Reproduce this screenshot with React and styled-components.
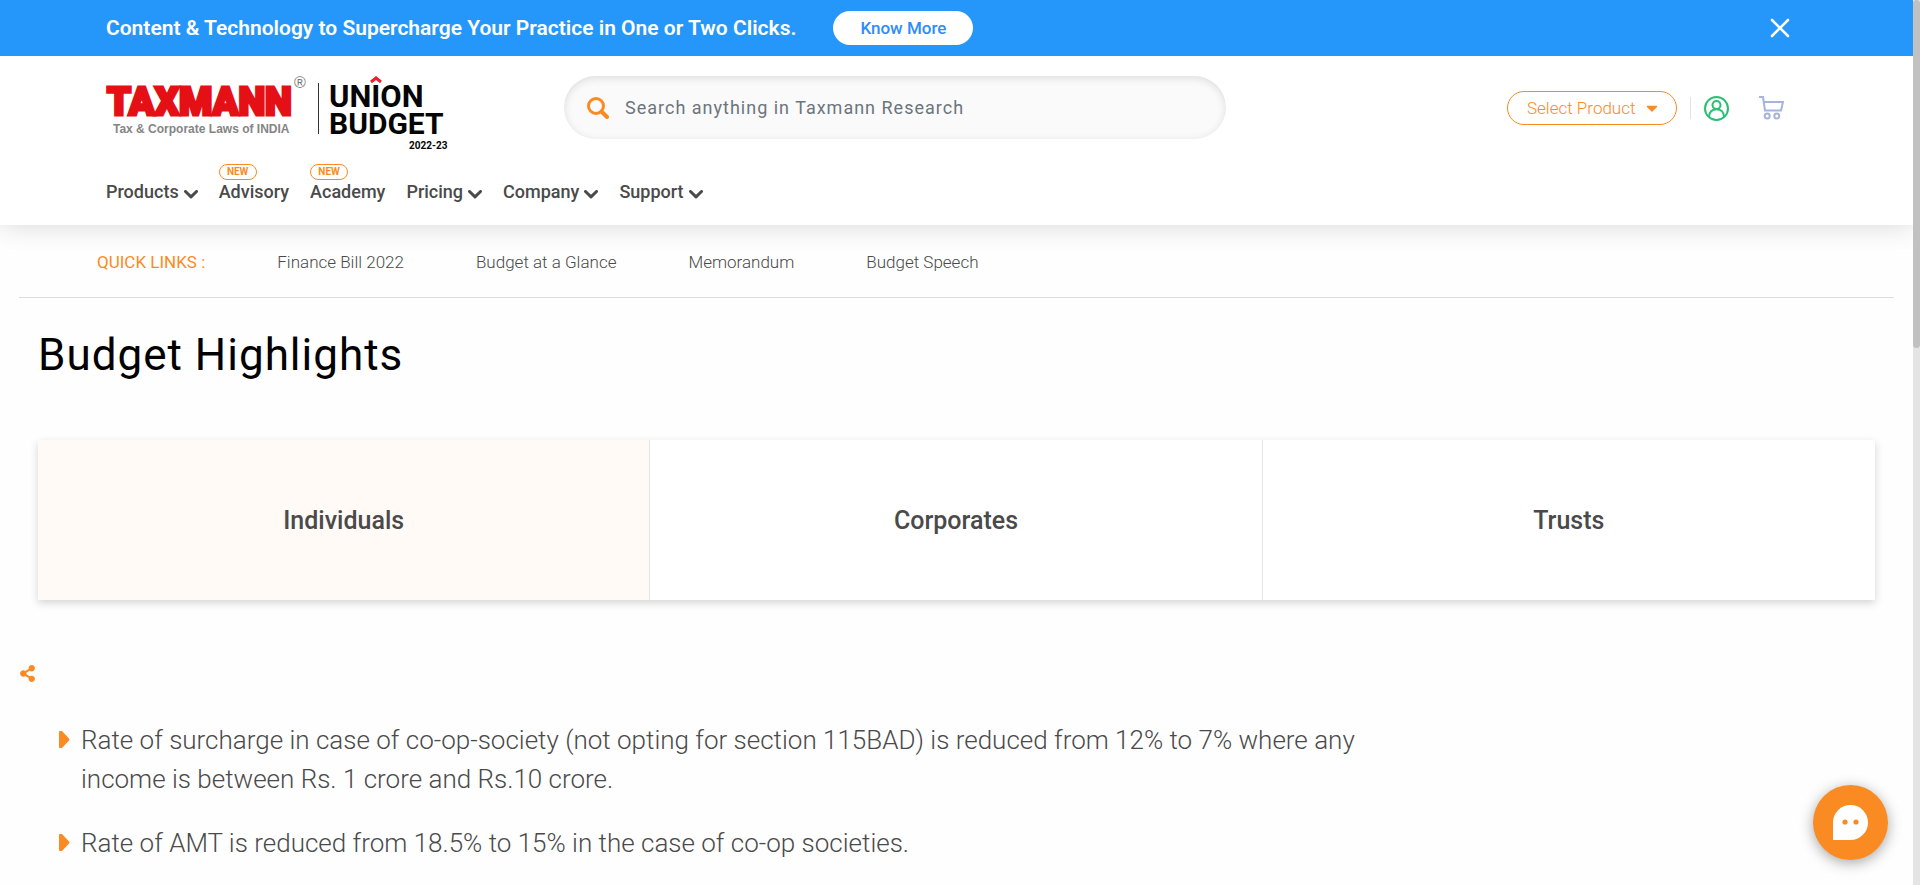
import React from "react";
import styled, { createGlobalStyle } from "styled-components";
import { FaShareAlt, FaCaretDown } from "react-icons/fa";

const GlobalStyle = createGlobalStyle`
  * { box-sizing: border-box; }
  body { margin: 0; background: #fefefe; color: #4a4a4a; font-family: Roboto, "Liberation Sans", sans-serif; }
  a { color: inherit; text-decoration: none; }
  button { font-family: inherit; cursor: pointer; }
`;

const Shell = styled.div`
  display: grid;
  grid-template-columns: minmax(0, 1fr) 7px;
  height: 100vh;
  overflow: hidden;
`;
const Page = styled.div`
  min-width: 0;
  height: 100vh;
  overflow: hidden;
`;
const ScrollRail = styled.div`
  height: 100vh;
  background: #e4e4e4;
`;
const ScrollThumb = styled.div`
  height: 348px;
  border-radius: 4px;
  background: #c1c1c1;
`;

const Banner = styled.div`
  position: relative;
  z-index: 1;
  display: flex;
  align-items: center;
  height: 56px;
  padding: 0 122px 0 106px;
  background: #2697fa;
  color: #fff;
`;
const BannerText = styled.p`
  margin: 0 37px 0 0;
  font-size: 21px;
  font-weight: 600;
`;
const KnowMore = styled.button`
  width: 140px;
  height: 34px;
  border: 0;
  border-radius: 17px;
  background: #fff;
  color: #2d8cff;
  font-size: 17px;
  font-weight: 500;
`;
const CloseButton = styled.button`
  display: flex;
  margin-left: auto;
  padding: 0;
  border: 0;
  background: none;
`;

const Header = styled.header`
  position: relative;
  height: 169px;
  padding: 20px 129px 0 106px;
  background: #fff;
  box-shadow: 0 0 26px rgba(0, 0, 0, 0.16);
`;
const HeaderRow = styled.div`
  display: grid;
  grid-template-columns: 458px minmax(0, 662px) 1fr;
  align-items: start;
  height: 76px;
`;
const SearchBox = styled.label`
  display: flex;
  align-items: center;
  gap: 16px;
  height: 63px;
  padding: 0 23px;
  border-radius: 32px;
  background: #fafafa;
  box-shadow: inset 0 2px 9px rgba(0, 0, 0, 0.12);
`;
const SearchInput = styled.input`
  flex: 1;
  min-width: 0;
  padding: 0;
  border: 0;
  outline: 0;
  background: none;
  color: #4a4a4a;
  font-family: inherit;
  font-size: 18px;
  letter-spacing: 1px;
  &::placeholder { color: #6c757d; opacity: 1; }
`;
const Actions = styled.div`
  display: flex;
  align-items: center;
  justify-content: flex-end;
  height: 64px;
`;
const ProductButton = styled.button`
  display: flex;
  align-items: center;
  gap: 8px;
  width: 170px;
  height: 34px;
  padding: 0 0 0 19px;
  border: 1px solid #fa8b23;
  border-radius: 17px;
  background: #fff;
  color: #fa8b23;
  font-size: 17px;
  font-weight: 300;
`;
const Divider = styled.span`
  width: 1px;
  height: 22px;
  margin: 0 13px;
  background: #dce5ee;
`;
const IconLink = styled.a`
  display: flex;
  margin-right: ${(p) => p.$gap || 0}px;
`;
const Nav = styled.nav`
  display: flex;
  gap: 21px;
  padding-top: 28px;
`;
const NavLink = styled.a`
  position: relative;
  display: flex;
  align-items: center;
  gap: 5px;
  color: #4a4a4a;
  font-size: 18px;
  font-weight: 500;
  line-height: 24px;
  svg { margin-top: 4px; }
`;
const NewBadge = styled.span`
  position: absolute;
  left: 0;
  bottom: 100%;
  width: 38px;
  height: 16px;
  border: 1px solid #fa8b23;
  border-radius: 8px;
  color: #fa8b23;
  font-size: 10px;
  font-weight: 700;
  line-height: 14px;
  text-align: center;
`;

const Main = styled.main`
  padding: 0 19px;
`;
const QuickLinks = styled.nav`
  display: flex;
  align-items: center;
  gap: 72px;
  height: 73px;
  padding-left: 78px;
  padding-top: 2px;
  border-bottom: 1px solid #dcdcdc;
  font-size: 17px;
  font-weight: 300;
`;
const QuickTitle = styled.span`
  color: #fa8b23;
  font-weight: 400;
`;
const Title = styled.h1`
  margin: 28px 19px 56px;
  color: #000;
  font-size: 44px;
  font-weight: 400;
  line-height: 58px;
  letter-spacing: 1px;
`;
const Tabs = styled.div`
  display: grid;
  grid-template-columns: repeat(3, 1fr);
  margin: 0 19px;
  box-shadow: 0 3px 8px rgba(0, 0, 0, 0.17);
`;
const Tab = styled.button`
  height: 160px;
  padding: 0;
  border: 0;
  border-right: 1px solid #e4e7ea;
  background: ${(p) => (p.$active ? "#fffaf5" : "#fff")};
  color: #4a4a4a;
  font-size: 25px;
  font-weight: 500;
  &:last-child { border-right: 0; }
`;
const ShareButton = styled.button`
  display: flex;
  margin: 65px 0 0;
  padding: 0;
  border: 0;
  background: none;
  color: #fa8b23;
`;
const Highlights = styled.ul`
  width: 75%;
  margin: 39px 0 0;
  padding: 0 15px 0 40px;
  list-style: none;
`;
const Highlight = styled.li`
  display: flex;
  gap: 11px;
  margin-bottom: 25px;
  font-size: 26px;
  font-weight: 300;
  line-height: 39px;
  svg { flex: none; margin-top: 10px; }
`;
const ChatButton = styled.button`
  position: fixed;
  right: 32px;
  bottom: 25px;
  display: flex;
  align-items: center;
  justify-content: center;
  width: 75px;
  height: 75px;
  padding: 0;
  border: 0;
  border-radius: 50%;
  background: #fa8b23;
  box-shadow: 0 3px 14px rgba(0, 0, 0, 0.35);
`;

const Logo = () => (
  <svg width="342" height="76" viewBox="0 0 342 76" overflow="visible" role="img" aria-label="Taxmann Union Budget 2022-23">
    <g fontFamily='Roboto, "Liberation Sans", sans-serif' fontWeight="900">
      <text x="1" y="39" fontSize="38" fill="#e50f16" stroke="#e50f16" strokeWidth="3">TAXMANN</text>
      <g fontWeight="700" fill="#050505">
        <text x="223" y="31" fontSize="31">UNION</text>
        <text x="223" y="58" fontSize="30">BUDGET</text>
        <text x="303" y="73" fontSize="10">2022-23</text>
      </g>
    </g>
    <text x="7" y="57" fontFamily='"Liberation Sans", sans-serif' fontWeight="700" fontSize="12" fill="#858585">Tax &amp; Corporate Laws of INDIA</text>
    <text x="188" y="12" fontFamily='"Liberation Sans", sans-serif' fontSize="16" fill="#777">®</text>
    <path d="M212.500 7V58" stroke="#333" strokeWidth="1" />
    <path d="M265 6L270 2L275 6" fill="none" stroke="#ef1f2f" strokeWidth="3" />
  </svg>
);

const SearchIcon = () => (
  <svg width="22" height="22" viewBox="0 0 22 22" fill="none" stroke="#fa8b23" strokeLinecap="round">
    <circle cx="9" cy="9" r="7.500" strokeWidth="3" />
    <path d="M14.500 14.500L20 20" strokeWidth="4" />
  </svg>
);
const ChevronIcon = () => (
  <svg width="14" height="9" viewBox="0 0 14 9" fill="none" stroke="#4a4a4a" strokeWidth="3">
    <path d="M1.500 1.500L7 6.800L12.500 1.500" strokeLinecap="round" strokeLinejoin="round" />
  </svg>
);
const UserIcon = () => (
  <svg width="25" height="25" viewBox="0 0 25 25" fill="none" stroke="#28bf73" strokeWidth="2">
    <circle cx="12.500" cy="12.500" r="11.500" />
    <circle cx="12.500" cy="9" r="4" />
    <path d="M5 21C5 16 8 13.200 12.500 13.200S20 16 20 21" />
  </svg>
);
const CartIcon = () => (
  <svg width="25" height="24" viewBox="0 0 25 24" fill="none" stroke="#a5b4dc" strokeWidth="2">
    <path d="M0 1H4L6 14.500H22L24 6H5" />
    <circle cx="8.200" cy="20" r="2.500" />
    <circle cx="17.800" cy="20" r="2.500" />
  </svg>
);
const Bullet = () => (
  <svg width="11" height="17" viewBox="0 0 11 17" fill="#fa8b23">
    <path d="M0 1Q0 0 1 0H3L10 7.500Q11 8.500 10 9.500L3 17H1Q0 17 0 16Z" />
  </svg>
);

const navItems = [
  { label: "Products", menu: true },
  { label: "Advisory", fresh: true },
  { label: "Academy", fresh: true },
  { label: "Pricing", menu: true },
  { label: "Company", menu: true },
  { label: "Support", menu: true },
];
const quickLinks = ["Finance Bill 2022", "Budget at a Glance", "Memorandum", "Budget Speech"];
const tabs = ["Individuals", "Corporates", "Trusts"];
const highlights = [
  "Rate of surcharge in case of co-op-society (not opting for section 115BAD) is reduced from 12% to 7% where any income is between Rs. 1 crore and Rs.10 crore.",
  "Rate of AMT is reduced from 18.5% to 15% in the case of co-op societies.",
];

export default function App() {
  return (
    <Shell>
      <GlobalStyle />
      <Page>
        <Banner>
          <BannerText>Content &amp; Technology to Supercharge Your Practice in One or Two Clicks.</BannerText>
          <KnowMore>Know More</KnowMore>
          <CloseButton aria-label="Close">
            <svg width="22" height="22" viewBox="0 0 22 22" stroke="#fff" strokeWidth="2.600" strokeLinecap="round">
              <path d="M3 3L19 19M19 3L3 19" />
            </svg>
          </CloseButton>
        </Banner>
        <Header>
          <HeaderRow>
            <a href="#home"><Logo /></a>
            <SearchBox>
              <SearchIcon />
              <SearchInput type="text" aria-label="Search" placeholder="Search anything in Taxmann Research" />
            </SearchBox>
            <Actions>
              <ProductButton>Select Product <FaCaretDown size={18} /></ProductButton>
              <Divider />
              <IconLink href="#account" aria-label="Account" $gap={30}><UserIcon /></IconLink>
              <IconLink href="#cart" aria-label="Cart"><CartIcon /></IconLink>
            </Actions>
          </HeaderRow>
          <Nav>
            {navItems.map((item) => (
              <NavLink key={item.label} href={`#${item.label.toLowerCase()}`}>
                {item.fresh && <NewBadge>NEW</NewBadge>}
                {item.label}
                {item.menu && <ChevronIcon />}
              </NavLink>
            ))}
          </Nav>
        </Header>
        <Main>
          <QuickLinks>
            <QuickTitle>QUICK LINKS :</QuickTitle>
            {quickLinks.map((label) => <a key={label} href="#budget">{label}</a>)}
          </QuickLinks>
          <Title>Budget Highlights</Title>
          <Tabs>
            {tabs.map((label, i) => <Tab key={label} $active={i === 0}>{label}</Tab>)}
          </Tabs>
          <ShareButton aria-label="Share"><FaShareAlt size={17} /></ShareButton>
          <Highlights>
            {highlights.map((text) => (
              <Highlight key={text}><Bullet /><span>{text}</span></Highlight>
            ))}
          </Highlights>
        </Main>
      </Page>
      <ScrollRail><ScrollThumb /></ScrollRail>
      <ChatButton aria-label="Chat">
        <svg width="35" height="35" viewBox="0 0 35 35">
          <path d="M0 35V17.500A17.500 17.500 0 1 1 17.500 35Z" fill="#fff" />
          <circle cx="12" cy="17" r="2.600" fill="#fa8b23" />
          <circle cx="23" cy="17" r="2.600" fill="#fa8b23" />
        </svg>
      </ChatButton>
    </Shell>
  );
}
